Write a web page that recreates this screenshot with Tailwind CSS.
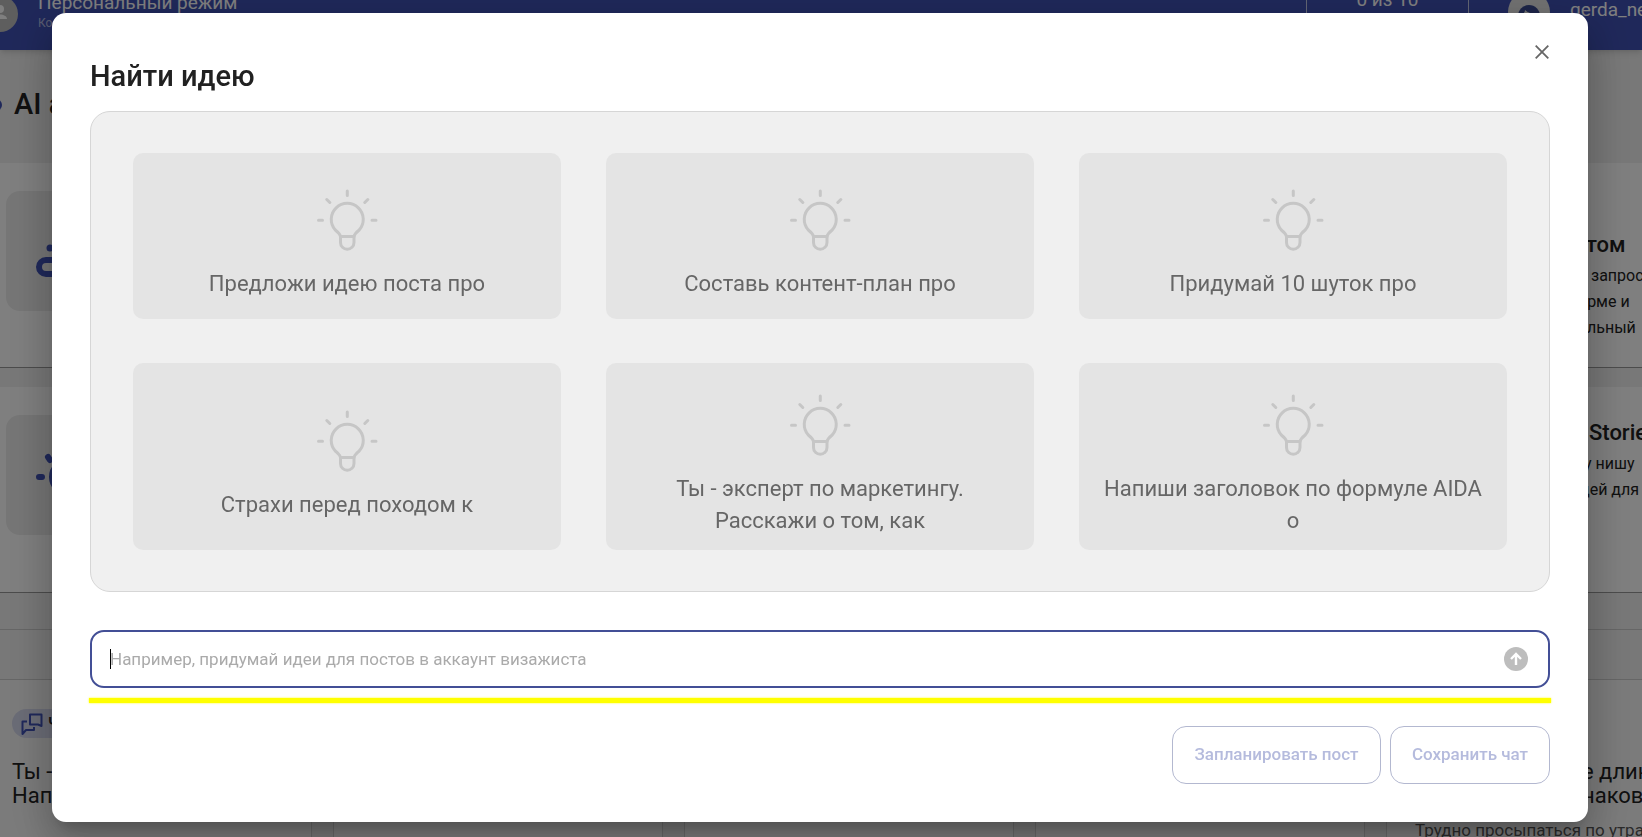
<!DOCTYPE html>
<html lang="ru">
<head>
<meta charset="utf-8">
<meta name="viewport" content="width=device-width, initial-scale=1">
<title>Найти идею</title>
<script src="https://cdn.jsdelivr.net/npm/@tailwindcss/browser@4"></script>
</head>
<body class="h-screen overflow-hidden bg-[#f0f0f0] font-['Roboto','Noto_Sans',sans-serif] text-[#212121]">
<svg class="hidden" aria-hidden="true">
  <symbol id="bulb" viewBox="0 0 64 64">
    <g fill="none" stroke="currentColor" stroke-width="3" stroke-linecap="round" stroke-linejoin="round">
      <path d="M25.5 48.500C25 45.800 22.800 44 20.300 42A16 16 0 1 1 44.200 42C41.700 44 39.500 45.800 39 48.500"/>
      <path d="M25.500 48.500H39V54.500A6.750 6.750 0 0 1 25.500 54.500Z"/>
    </g>
    <path d="M32.300 3v4.500M11.800 11.500l3 3M52.800 11.500l-3 3M3.500 32.300h4M57 32.300h4" fill="none" stroke="currentColor" stroke-width="3" stroke-linecap="round"/>
  </symbol>
</svg>

<!-- Page under the dialog -->
<div class="flex h-full flex-col overflow-hidden" aria-hidden="true">
  <header class="z-10 flex h-[50px] shrink-0 items-end justify-between overflow-hidden bg-[#3f51b5] whitespace-nowrap text-white shadow-md">
    <div class="flex items-end">
      <svg class="-ml-[18px] mb-[18px] size-9" viewBox="0 0 36 36"><circle cx="18" cy="18" r="18" fill="#bdbdbd"/><path d="M11 23c0-6 14-6 14 0zM18 9a4 4 0 1 0 0 8 4 4 0 0 0 0-8z" fill="#fff"/></svg>
      <div class="ml-5 pb-5">
        <div class="mb-[3px] text-[19px] leading-5">Персональный режим</div>
        <div class="text-xs leading-[14px] text-white/60">Ко</div>
      </div>
    </div>
    <div class="flex h-full">
      <div class="flex w-[163px] items-end justify-center border-x border-white/70 pb-10 text-[19px] leading-5">0 из 10</div>
      <div class="flex w-[173px] items-end overflow-hidden pl-[39px]">
        <svg class="mb-[17px] size-[42px] shrink-0" viewBox="0 0 42 42"><circle cx="21" cy="21" r="21" fill="#e4e4e4"/><path d="M10 25a11 11 0 0 1 22 0v8H10z" fill="#3a4a90"/><path d="M12 24q5-1 5-5 4 4 12 4l1 1v9H12z" fill="#e4e4e4"/><path d="M15 28h4M24 28h4" stroke="#3a4a90" stroke-width="3"/></svg>
        <span class="ml-5 pb-[30px] text-[19px] leading-5">gerda_ne</span>
      </div>
    </div>
  </header>
  <div class="flex h-[113px] shrink-0 items-center gap-3 overflow-hidden pb-1 whitespace-nowrap">
    <span class="-ml-[10px] size-3 shrink-0 rounded-full bg-[#3f51b5]"></span>
    <h2 class="text-[29px] font-medium">AI а</h2>
  </div>
  <section class="flex h-[205px] shrink-0 justify-between overflow-hidden border-b border-black/40 bg-white pt-7 pl-[6px] whitespace-nowrap">
    <div class="flex size-[120px] items-center justify-center rounded-[14px] bg-[#ececec]">
      <svg class="size-16 text-[#3f51b5]" viewBox="0 0 64 64" fill="none" stroke="currentColor" stroke-width="6"><rect x="5" y="41" width="56" height="14" rx="7"/><circle cx="16" cy="29" r="3.500" fill="currentColor" stroke="none"/></svg>
    </div>
    <div class="w-16 overflow-hidden pt-10">
      <h3 class="mb-1 pl-2 text-[22px] leading-7 font-medium">том</h3>
      <p class="pl-[13px] text-base leading-[26px]">запрос</p>
      <p class="text-base leading-[26px]">орме и</p>
      <p class="pl-[9px] text-base leading-[26px]">льный</p>
    </div>
  </section>
  <section class="mt-[19px] flex h-[206px] shrink-0 justify-between overflow-hidden border-b border-black/40 bg-white pt-7 pl-[6px] whitespace-nowrap">
    <div class="flex size-[120px] items-center justify-center rounded-[14px] bg-[#ececec]">
      <svg class="size-16 text-[#3f51b5]" viewBox="0 0 64 64" fill="none" stroke="currentColor" stroke-width="6" stroke-linecap="round"><circle cx="34" cy="34" r="16"/><path d="M5 34h3M14 14l2 3M54 14l-2 3M34 4v3"/></svg>
    </div>
    <div class="w-16 overflow-hidden pt-1">
      <h3 class="mb-1 pl-[11px] text-[22px] leading-7 font-medium">Storie</h3>
      <p class="pl-[6px] text-base leading-[26px]">у нишу</p>
      <p class="pl-[2px] text-base leading-[26px]">дей для</p>
    </div>
  </section>
  <div class="mt-9 h-[51px] shrink-0 border-y border-black/15"></div>
  <div class="-ml-[18px] grid flex-1 grid-cols-[repeat(5,330px)] gap-[21px] overflow-hidden whitespace-nowrap">
    <article class="border-r border-black/15 bg-[#f7f7f7] pt-[29px] pl-[30px]">
      <div class="flex h-[29px] w-36 items-center rounded-full bg-[#d5d8ec] pl-2">
        <svg class="size-6 text-[#3f51b5]" viewBox="0 0 24 24" fill="none" stroke="currentColor" stroke-width="2" stroke-linejoin="round"><path d="M10 2.500h11.500v11.500L18 12.500h-8zM7 9.500H2.500v12.500l3.500-4h8v-3"/></svg>
        <span class="ml-1 text-base font-medium">Ч</span>
      </div>
      <p class="mt-[22px] text-[22px] leading-6">Ты -</p><p class="text-[22px] leading-6">Нап</p>
    </article>
    <article class="border-x border-black/15 bg-[#f7f7f7]"></article>
    <article class="border-x border-black/15 bg-[#f7f7f7]"></article>
    <article class="border-x border-black/15 bg-[#f7f7f7]"></article>
    <article class="border-l border-black/15 bg-[#f7f7f7] pt-20 pl-7">
      <p class="pl-[167px] text-[22px] leading-6">е длин</p><p class="pl-[167px] text-[22px] leading-6">наков</p>
      <p class="mt-3 text-[17px] leading-5 text-[#555]">Трудно просыпаться по утра</p>
    </article>
  </div>
</div>

<!-- Dialog -->
<div class="fixed inset-0 z-20 flex items-start bg-black/50 pt-[13px] pr-[54px] pl-13">
  <main role="dialog" aria-labelledby="dialog-title" class="relative w-full rounded-[14px] bg-white px-[38px] pt-[46px] pb-[38px] shadow-[0_11px_15px_-7px_rgba(0,0,0,0.2),0_24px_38px_3px_rgba(0,0,0,0.14),0_9px_46px_8px_rgba(0,0,0,0.12)]">
    <button type="button" aria-label="Закрыть" class="absolute top-[27px] right-[34px] flex size-6 items-center justify-center text-[#666]">
      <svg class="size-[14px]" viewBox="0 0 14 14" fill="none" stroke="currentColor" stroke-width="1.800"><path d="M.7.7l12.600 12.600M13.300.7L.7 13.300"/></svg>
    </button>
    <h1 id="dialog-title" class="mb-[18px] text-[29px] leading-[34px] font-medium">Найти идею</h1>

    <div class="grid auto-rows-auto grid-cols-3 gap-x-[45px] gap-y-11 rounded-[20px] border border-[#d6d6d6] bg-[#f0f0f0] px-[42px] py-[41px] text-[22px] leading-8 text-[#666]">
      <button type="button" class="flex min-h-[166px] flex-col items-center justify-center rounded-[10px] bg-[#e4e4e4] px-4"><svg class="my-4 size-16 text-[#c6c6c6]"><use href="#bulb"/></svg>Предложи идею поста про</button>
      <button type="button" class="flex min-h-[166px] flex-col items-center justify-center rounded-[10px] bg-[#e4e4e4] px-4"><svg class="my-4 size-16 text-[#c6c6c6]"><use href="#bulb"/></svg>Составь контент-план про</button>
      <button type="button" class="flex min-h-[166px] flex-col items-center justify-center rounded-[10px] bg-[#e4e4e4] px-4"><svg class="my-4 size-16 text-[#c6c6c6]"><use href="#bulb"/></svg>Придумай 10 шуток про</button>
      <button type="button" class="flex min-h-[187px] flex-col items-center justify-center rounded-[10px] bg-[#e4e4e4] px-4"><svg class="my-4 size-16 text-[#c6c6c6]"><use href="#bulb"/></svg>Страхи перед походом к</button>
      <button type="button" class="flex min-h-[187px] flex-col items-center justify-center rounded-[10px] bg-[#e4e4e4] px-4"><svg class="my-4 size-16 text-[#c6c6c6]"><use href="#bulb"/></svg><span>Ты - эксперт по маркетингу.<br>Расскажи о том, как</span></button>
      <button type="button" class="flex min-h-[187px] flex-col items-center justify-center rounded-[10px] bg-[#e4e4e4] px-4"><svg class="my-4 size-16 text-[#c6c6c6]"><use href="#bulb"/></svg><span>Напиши заголовок по формуле AIDA<br>о</span></button>
    </div>

    <form class="relative mt-[38px] flex h-[58px] items-center rounded-[14px] border-2 border-[#434f96] pr-5 pl-[18px]">
      <span class="absolute left-[18px] h-5 w-px bg-black"></span>
      <input type="text" aria-label="Запрос" placeholder="Например, придумай идеи для постов в аккаунт визажиста" class="h-full flex-1 text-[17px] outline-none placeholder:text-[#aaa]">
      <button type="submit" aria-label="Отправить"><svg class="size-6" viewBox="0 0 24 24"><circle cx="12" cy="12" r="12" fill="#bdbdbd"/><path d="M12 18V7M7 12l5-5 5 5" fill="none" stroke="#fff" stroke-width="2.400"/></svg></button>
    </form>
    <div class="-mx-px mt-[10px] mb-[23px] h-[5px] bg-[#ffff00] shadow-[0_0_2px_#ffff00]"></div>
    <div class="flex justify-end gap-[9px]">
      <button type="button" disabled class="h-[58px] min-w-[209px] rounded-[14px] border border-[#b3b8d0] px-[18px] text-[17px] font-medium text-[#b5bbdd]">Запланировать пост</button>
      <button type="button" disabled class="h-[58px] min-w-[160px] rounded-[14px] border border-[#b3b8d0] px-[18px] text-[17px] font-medium text-[#b5bbdd]">Сохранить чат</button>
    </div>
  </main>
</div>
</body>
</html>
